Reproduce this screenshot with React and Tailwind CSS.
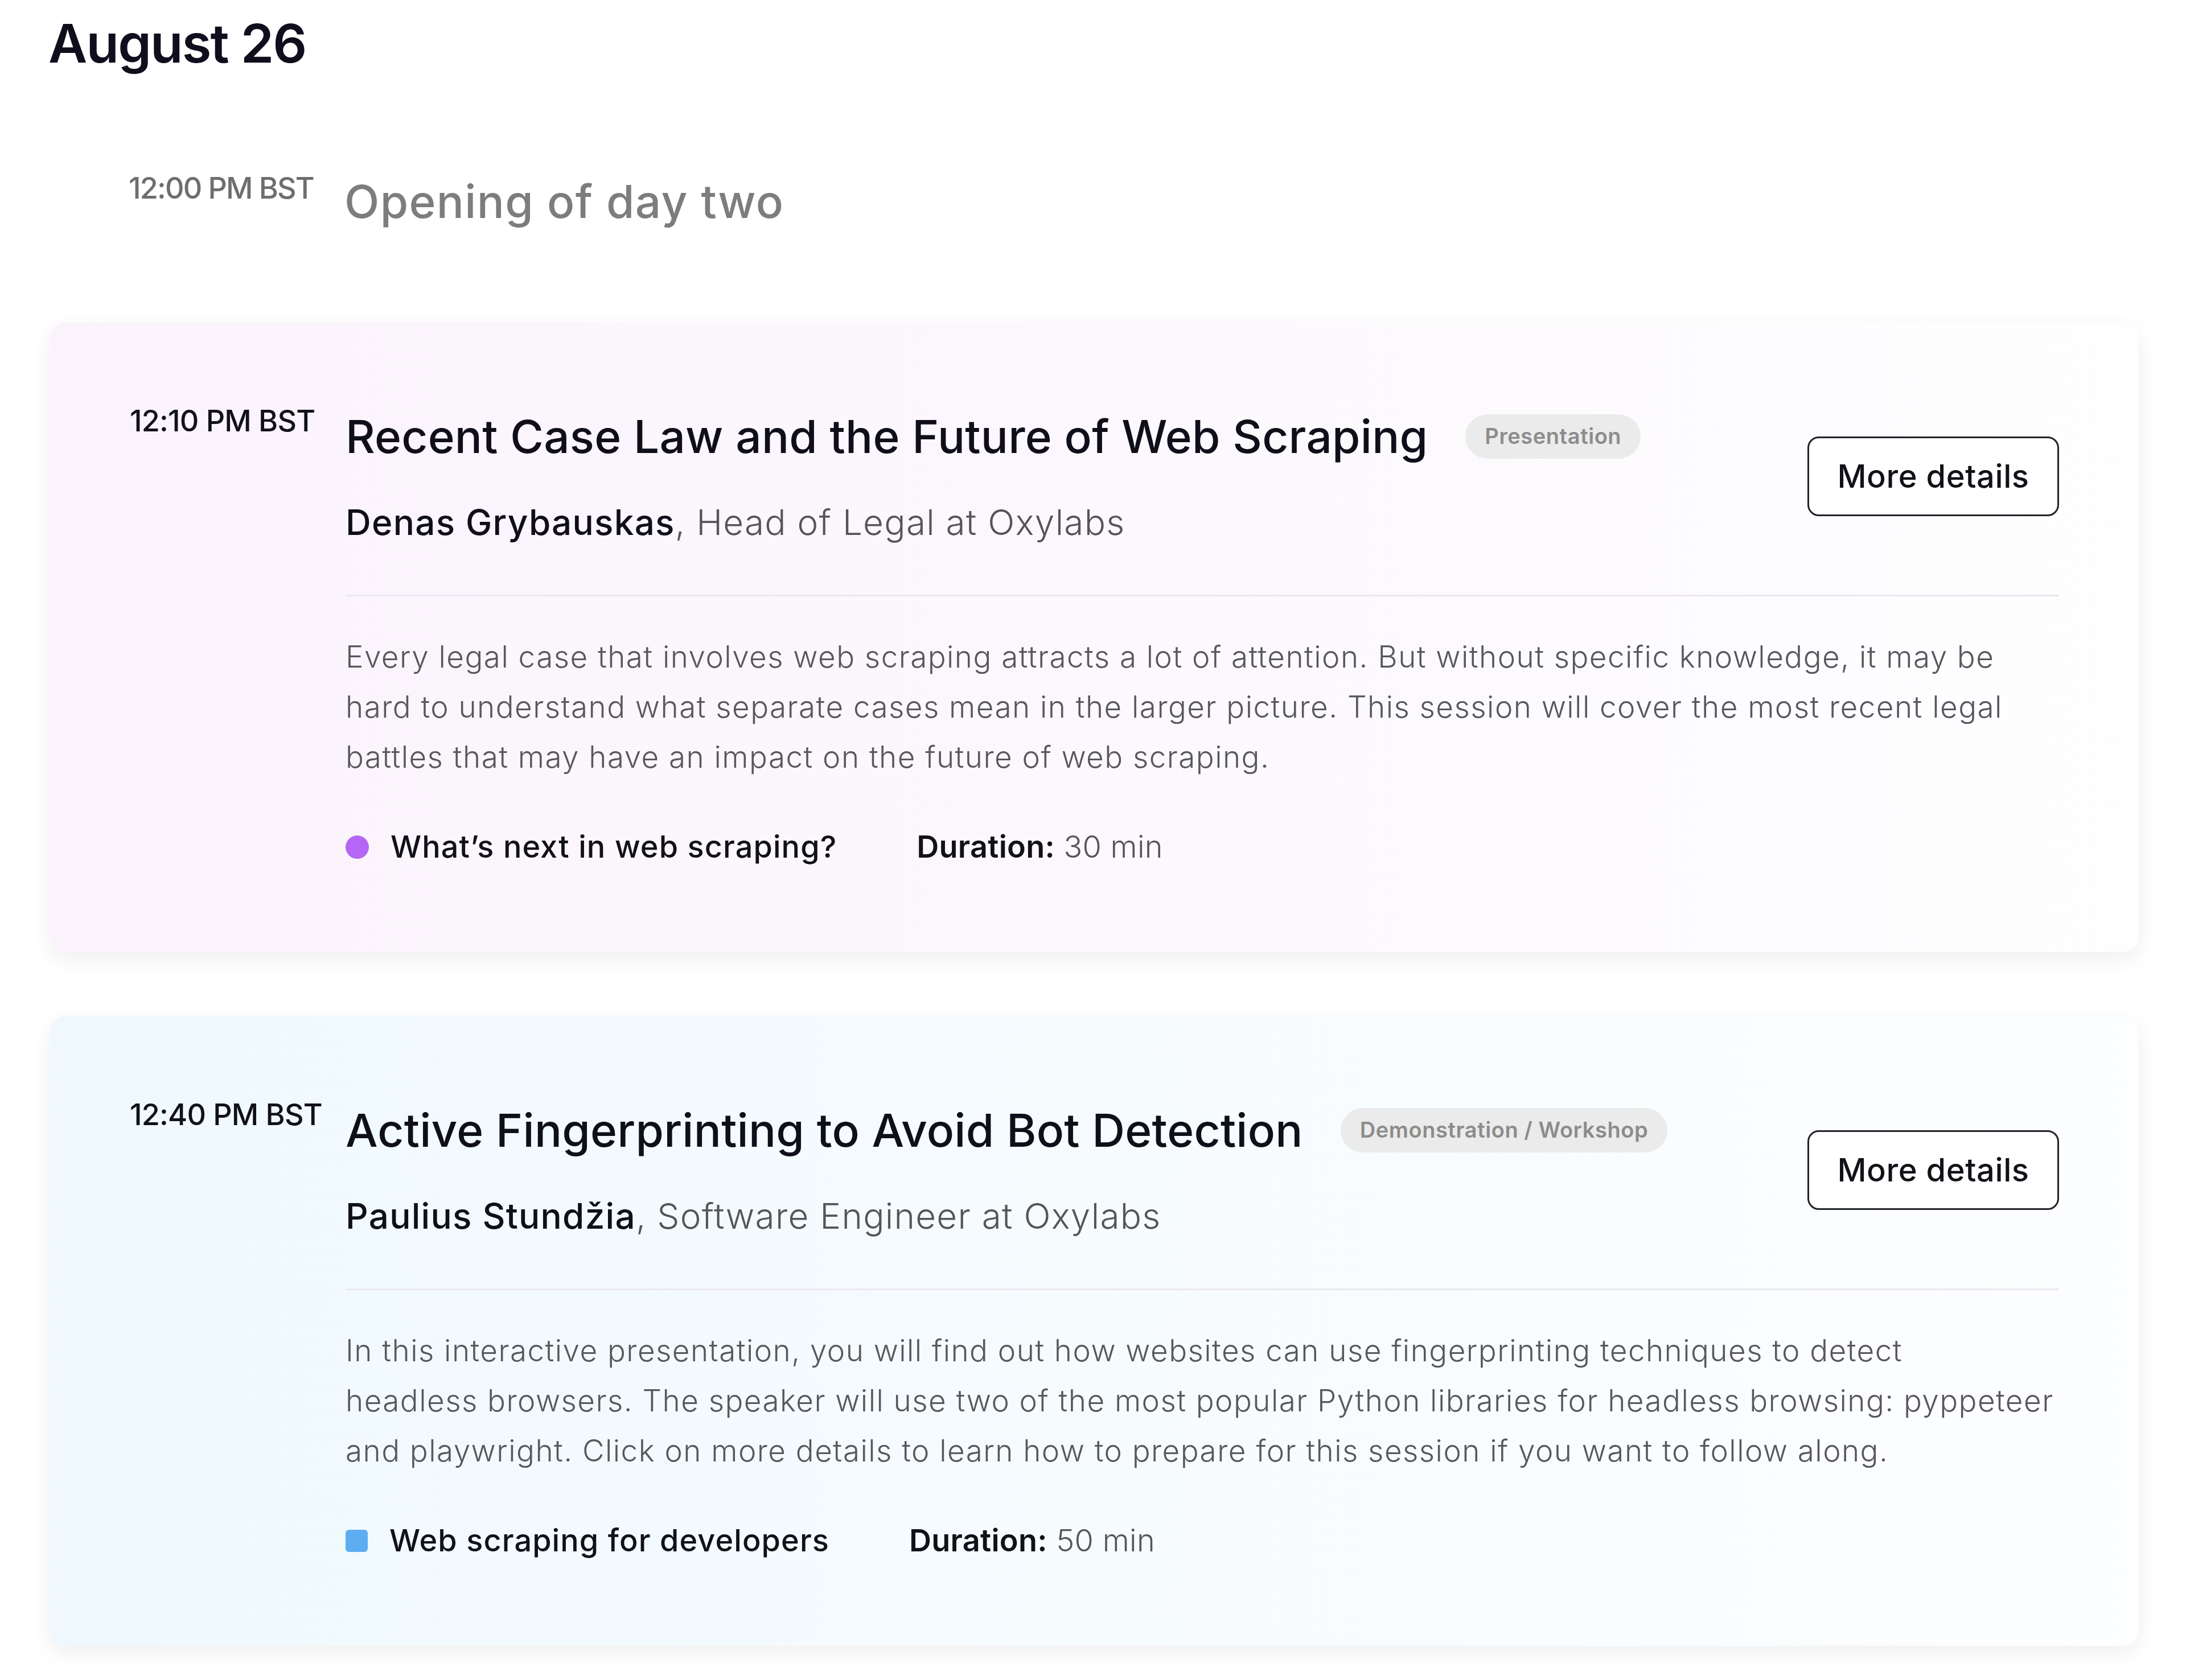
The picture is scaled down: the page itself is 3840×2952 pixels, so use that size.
import React from "react";

const sessions = [
  {
    time: "12:10 PM BST",
    title: "Recent Case Law and the Future of Web Scraping",
    badge: "Presentation",
    name: "Denas Grybauskas",
    role: "Head of Legal at Oxylabs",
    lines: [
      "Every legal case that involves web scraping attracts a lot of attention. But without specific knowledge, it may be",
      "hard to understand what separate cases mean in the larger picture. This session will cover the most recent legal",
      "battles that may have an impact on the future of web scraping.",
    ],
    track: "What\u2019s next in web scraping?",
    marker: "dot",
    duration: "30 min",
    bg: "bg-linear-to-r from-[#fbf3fc] via-[#fcf8fd] to-[#fefeff]",
  },
  {
    time: "12:40 PM BST",
    title: "Active Fingerprinting to Avoid Bot Detection",
    badge: "Demonstration / Workshop",
    name: "Paulius Stund\u017eia",
    role: "Software Engineer at Oxylabs",
    lines: [
      "In this interactive presentation, you will find out how websites can use fingerprinting techniques to detect",
      "headless browsers. The speaker will use two of the most popular Python libraries for headless browsing: pyppeteer",
      "and playwright. Click on more details to learn how to prepare for this session if you want to follow along.",
    ],
    track: "Web scraping for developers",
    marker: "square",
    duration: "50 min",
    bg: "bg-linear-to-r from-[#eff9fd] via-[#f6fbfe] to-[#fdfeff]",
  },
];

function Card({ s, className }) {
  return (
    <div
      className={`rounded-[28px] shadow-[0_12px_36px_rgba(40,30,60,0.07)] pl-[140px] pr-[140px] pt-[143px] pb-[152px] grid grid-cols-[379px_minmax(0,1fr)] ${s.bg} ${className}`}
    >
      <div className="text-[52px] leading-[1.2] font-medium text-[#111118] tracking-[-0.015em] whitespace-nowrap">
        {s.time}
      </div>
      <div className="flex flex-col min-w-0">
        <div className="flex items-center justify-between pt-[10px]">
          <div className="flex flex-col">
            <div className="flex items-center">
              <h3 className="text-[80px] leading-[1.2] font-medium text-[#0f0f1a] tracking-[0.003em] whitespace-nowrap">
                {s.title}
              </h3>
              <span className="ml-[66px] h-[78px] px-[34px] rounded-full bg-[#ebebeb] text-[#8c8c8c] text-[38px] font-semibold tracking-[0.015em] flex items-center whitespace-nowrap">
                {s.badge}
              </span>
            </div>
            <div className="mt-[66px] text-[62px] leading-[1.2] tracking-[0.02em] whitespace-nowrap">
              <span className="font-medium text-[#0f0f1a]">{s.name}</span>
              <span className="font-light text-[#555558]">, {s.role}</span>
            </div>
          </div>
          <button className="shrink-0 w-[442px] h-[140px] rounded-[20px] border-[3px] border-[#222228] bg-white text-[56px] font-medium tracking-[0.01em] text-[#111118] flex items-center justify-center">
            More details
          </button>
        </div>
        <div className="mt-[90px] h-[3px] bg-[#ece8ef]" />
        <div className="mt-[62px] text-[53px] leading-[88px] font-light text-[#57575c] tracking-[0.027em]">
          {s.lines.map((l, i) => (
            <span key={i} className="block whitespace-nowrap">
              {l}
            </span>
          ))}
        </div>
        <div className="mt-[82px] flex items-center text-[54px] leading-[1.2]">
          {s.marker === "dot" ? (
            <span className="w-[41px] h-[41px] rounded-full bg-[#b566f4]" />
          ) : (
            <span className="w-[39px] h-[39px] rounded-[6px] bg-[#5caef1]" />
          )}
          <span className="ml-[38px] font-medium text-[#111118] tracking-[0.02em] whitespace-nowrap">{s.track}</span>
          <span className="ml-[140px] whitespace-nowrap tracking-[0.005em]">
            <span className="font-semibold text-[#111118]">Duration:</span>
            <span className="font-light text-[#55555a]"> {s.duration}</span>
          </span>
        </div>
      </div>
    </div>
  );
}

export default function App() {
  return (
    <div className="w-[3840px] min-h-[2952px] bg-white font-['Inter','Liberation_Sans',sans-serif] pl-[88px] pr-[83px] pt-[20px]">
      <h2 className="-ml-[3px] text-[94px] leading-[1.2] font-semibold text-[#0e0e1c] tracking-[-0.02em]">
        August 26
      </h2>
      <div className="mt-[167px] pl-[138px] grid grid-cols-[379px_1fr]">
        <div className="text-[52px] leading-[1.2] font-medium text-[#6e6e70] tracking-[-0.035em] whitespace-nowrap">
          12:00 PM BST
        </div>
        <div className="pt-[6px] text-[80px] leading-[1.2] font-medium text-[#7d7d80] tracking-[0.017em]">
          Opening of day two
        </div>
      </div>
      <Card s={sessions[0]} className="mt-[164px]" />
      <Card s={sessions[1]} className="mt-[112px]" />
    </div>
  );
}
